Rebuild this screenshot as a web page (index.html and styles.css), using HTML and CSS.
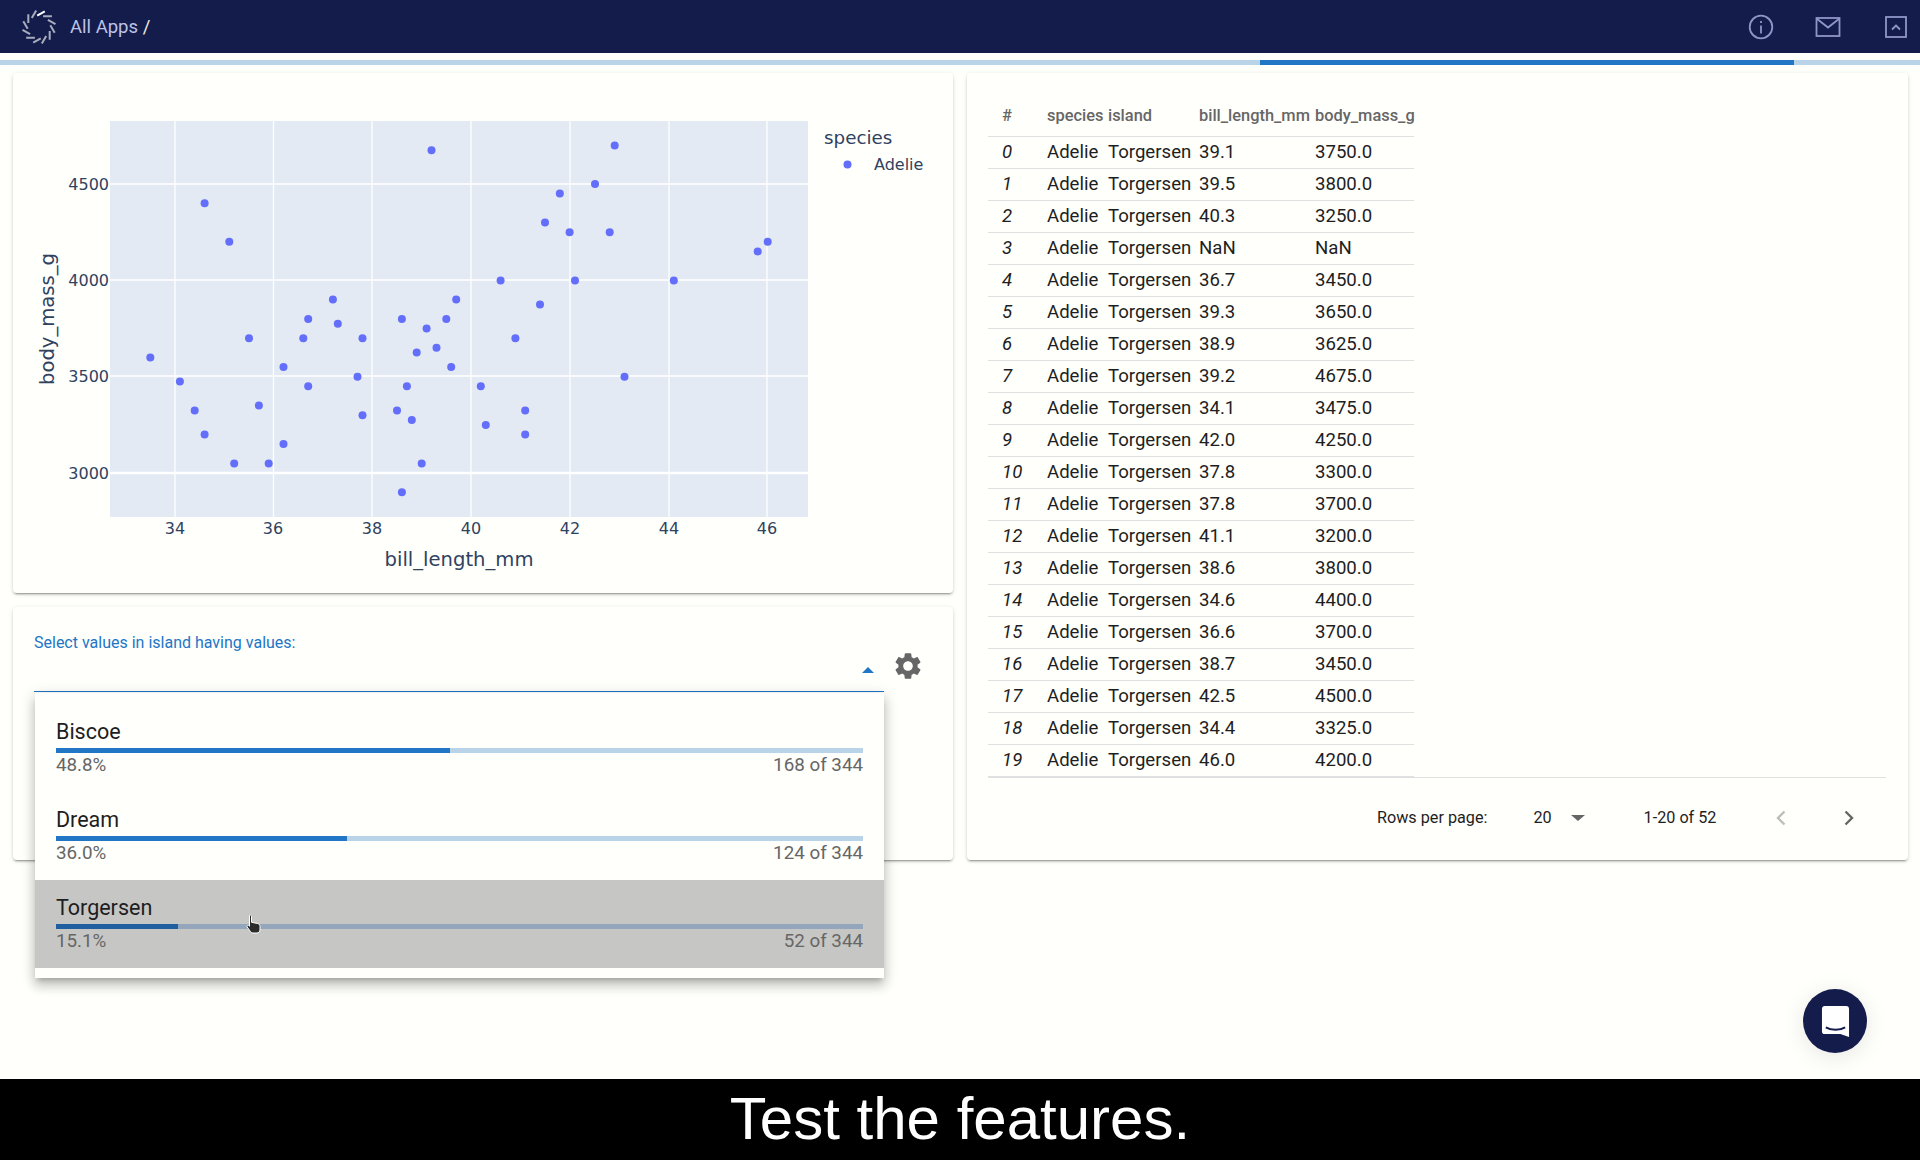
FILE: index.html
```html
<!DOCTYPE html>
<html lang="en">
  <head>
    <meta charset="UTF-8" />
    <title>All Apps</title>
    <link rel="stylesheet" href="styles.css">
  </head>
  <body>
    <header class="topbar">
      <div class="brand">
        <svg class="logo" width="38" height="38" viewBox="-19 -19 38 38">
          <g class="logo-dash">
            <line x1="-1.8" y1="-11.3" x2="5.8" y2="-15.7" class="logo-first" />
            <line x1="-1.8" y1="-11.3" x2="5.8" y2="-15.7" transform="rotate(30)" />
            <line x1="-1.8" y1="-11.3" x2="5.8" y2="-15.7" transform="rotate(60)" />
            <line x1="-1.8" y1="-11.3" x2="5.8" y2="-15.7" transform="rotate(90)" />
            <line x1="-1.8" y1="-11.3" x2="5.8" y2="-15.7" transform="rotate(120)" />
            <line x1="-1.8" y1="-11.3" x2="5.8" y2="-15.7" transform="rotate(150)" />
            <line x1="-1.8" y1="-11.3" x2="5.8" y2="-15.7" transform="rotate(180)" />
            <line x1="-1.8" y1="-11.3" x2="5.8" y2="-15.7" transform="rotate(210)" />
            <line x1="-1.8" y1="-11.3" x2="5.8" y2="-15.7" transform="rotate(240)" />
            <line x1="-1.8" y1="-11.3" x2="5.8" y2="-15.7" transform="rotate(270)" />
            <line x1="-1.8" y1="-11.3" x2="5.8" y2="-15.7" transform="rotate(300)" />
            <line x1="-1.8" y1="-11.3" x2="5.8" y2="-15.7" transform="rotate(330)" />
          </g>
        </svg>
        <span class="crumb">All Apps <span class="crumb-sep">/</span></span>
      </div>
      <div class="top-icons">
        <svg width="26" height="26" viewBox="0 0 26 26" class="top-icon">
          <circle cx="13" cy="13" r="11.3" />
          <line x1="13" y1="11.5" x2="13" y2="19.5" />
          <line x1="13" y1="7" x2="13" y2="9" />
        </svg>
        <svg width="26" height="22" viewBox="0 0 26 22" class="top-icon">
          <rect x="1.5" y="2" width="23" height="18" />
          <polyline points="1.5,2.5 13,11.5 24.5,2.5" />
        </svg>
        <svg width="24" height="24" viewBox="0 0 24 24" class="top-icon top-icon-box">
          <rect x="2" y="2" width="20" height="20" />
          <polyline points="8,14.5 12,10.5 16,14.5" />
        </svg>
      </div>
    </header>

    <div class="progress"><div class="progress-fill"></div></div>

    <main class="content">
      <div class="left-col">
        <section class="card chart-card">
          <svg class="plot" width="940" height="520" viewBox="13 73 940 520">
            <rect x="110" y="121" width="698" height="396" class="plot-bg" />
            <g class="grid">
              <line x1="175" y1="121" x2="175" y2="517" />
              <line x1="273.500" y1="121" x2="273.500" y2="517" />
              <line x1="372" y1="121" x2="372" y2="517" />
              <line x1="471" y1="121" x2="471" y2="517" />
              <line x1="570" y1="121" x2="570" y2="517" />
              <line x1="669" y1="121" x2="669" y2="517" />
              <line x1="767" y1="121" x2="767" y2="517" />
              <line x1="110" y1="184" x2="808" y2="184" />
              <line x1="110" y1="280" x2="808" y2="280" />
              <line x1="110" y1="376" x2="808" y2="376" />
              <line x1="110" y1="473" class="grid-bold" x2="808" y2="473" />
            </g>
            <g class="dots">
              <circle cx="150.3" cy="357.4" r="4" />
              <circle cx="179.9" cy="381.5" r="4" />
              <circle cx="194.7" cy="410.4" r="4" />
              <circle cx="204.6" cy="434.5" r="4" />
              <circle cx="204.6" cy="203.3" r="4" />
              <circle cx="229.3" cy="241.8" r="4" />
              <circle cx="234.2" cy="463.4" r="4" />
              <circle cx="249" cy="338.2" r="4" />
              <circle cx="258.9" cy="405.6" r="4" />
              <circle cx="268.7" cy="463.4" r="4" />
              <circle cx="283.5" cy="367.1" r="4" />
              <circle cx="283.5" cy="444.1" r="4" />
              <circle cx="303.3" cy="338.2" r="4" />
              <circle cx="308.2" cy="318.9" r="4" />
              <circle cx="308.2" cy="386.3" r="4" />
              <circle cx="332.9" cy="299.6" r="4" />
              <circle cx="337.8" cy="323.7" r="4" />
              <circle cx="357.5" cy="376.7" r="4" />
              <circle cx="362.5" cy="338.2" r="4" />
              <circle cx="362.5" cy="415.2" r="4" />
              <circle cx="397" cy="410.4" r="4" />
              <circle cx="401.9" cy="318.9" r="4" />
              <circle cx="401.9" cy="492.3" r="4" />
              <circle cx="406.9" cy="386.3" r="4" />
              <circle cx="411.8" cy="420.1" r="4" />
              <circle cx="416.7" cy="352.6" r="4" />
              <circle cx="421.7" cy="463.4" r="4" />
              <circle cx="426.6" cy="328.5" r="4" />
              <circle cx="431.5" cy="150.3" r="4" />
              <circle cx="436.5" cy="347.8" r="4" />
              <circle cx="446.3" cy="318.9" r="4" />
              <circle cx="451.2" cy="367.1" r="4" />
              <circle cx="456.2" cy="299.6" r="4" />
              <circle cx="480.8" cy="386.3" r="4" />
              <circle cx="485.8" cy="424.9" r="4" />
              <circle cx="500.6" cy="280.4" r="4" />
              <circle cx="515.4" cy="338.2" r="4" />
              <circle cx="525.2" cy="410.4" r="4" />
              <circle cx="525.2" cy="434.5" r="4" />
              <circle cx="540" cy="304.4" r="4" />
              <circle cx="545" cy="222.5" r="4" />
              <circle cx="559.8" cy="193.6" r="4" />
              <circle cx="569.6" cy="232.2" r="4" />
              <circle cx="575" cy="280.4" r="4" />
              <circle cx="595" cy="184" r="4" />
              <circle cx="609.7" cy="232.2" r="4" />
              <circle cx="614.7" cy="145.5" r="4" />
              <circle cx="624.5" cy="376.7" r="4" />
              <circle cx="673.8" cy="280.4" r="4" />
              <circle cx="757.7" cy="251.4" r="4" />
              <circle cx="767.7" cy="241.8" r="4" />
            </g>
            <g class="tick tick-x">
              <text x="175" y="534">34</text>
              <text x="273" y="534">36</text>
              <text x="372" y="534">38</text>
              <text x="471" y="534">40</text>
              <text x="570" y="534">42</text>
              <text x="669" y="534">44</text>
              <text x="767" y="534">46</text>
            </g>
            <g class="tick tick-y">
              <text x="109" y="190">4500</text>
              <text x="109" y="286">4000</text>
              <text x="109" y="382">3500</text>
              <text x="109" y="479">3000</text>
            </g>
            <text class="axis-title" x="459" y="566" text-anchor="middle">bill_length_mm</text>
            <text class="axis-title" transform="translate(54 319) rotate(-90)" text-anchor="middle">body_mass_g</text>
            <text class="legend-title" x="824" y="144">species</text>
            <circle class="legend-dot" cx="847.5" cy="164.5" r="4" />
            <text class="legend-label" x="874" y="170">Adelie</text>
          </svg>
        </section>

        <section class="card select-card">
          <div class="select-row">
            <div class="select-field">
              <div class="select-label">Select values in island having values:</div>
              <div class="select-input"><span class="caret-up"></span></div>
              <div class="dropdown">
                <div class="option">
                  <div class="option-name">Biscoe</div>
                  <div class="bar"><div class="bar-fill" style="width: 48.8%"></div></div>
                  <div class="option-meta"><span>48.8%</span><span>168 of 344</span></div>
                </div>
                <div class="option">
                  <div class="option-name">Dream</div>
                  <div class="bar"><div class="bar-fill" style="width: 36%"></div></div>
                  <div class="option-meta"><span>36.0%</span><span>124 of 344</span></div>
                </div>
                <div class="option option-hover">
                  <div class="option-name">Torgersen</div>
                  <div class="bar"><div class="bar-fill" style="width: 15.1%"></div></div>
                  <div class="option-meta"><span>15.1%</span><span>52 of 344</span></div>
                  <svg class="cursor" width="16" height="20" viewBox="0 0 16 20">
                    <path d="M3.5 1.5c.8-.8 2-.4 2 .8v6l6 1.2c1.500.4 2.500 1.200 2.500 2.800v3.700c0 1.500-1.500 3-3 3H7c-1.500 0-2.300-.8-3-2L1.200 13c-.6-1 .2-2 1.300-1.600l1 .8z" />
                  </svg>
                </div>
              </div>
            </div>
            <svg class="gear" width="32" height="32" viewBox="0 0 24 24">
              <path d="M19.14 12.94c.04-.3.06-.61.06-.94 0-.32-.02-.64-.07-.94l2.03-1.58c.18-.14.23-.41.12-.61l-1.92-3.32c-.12-.22-.37-.29-.59-.22l-2.39.96c-.5-.38-1.03-.7-1.62-.94l-.36-2.54c-.04-.24-.24-.41-.48-.41h-3.84c-.24 0-.43.17-.47.41l-.36 2.54c-.59.24-1.13.57-1.62.94l-2.39-.96c-.22-.08-.47 0-.59.22L2.74 8.87c-.12.21-.08.47.12.61l2.03 1.58c-.05.3-.09.63-.09.94s.02.64.07.94l-2.03 1.58c-.18.14-.23.41-.12.61l1.92 3.32c.12.22.37.29.59.22l2.39-.96c.5.38 1.03.7 1.62.94l.36 2.54c.05.24.24.41.48.41h3.84c.24 0 .44-.17.47-.41l.36-2.54c.59-.24 1.13-.56 1.62-.94l2.39.96c.22.08.47 0 .59-.22l1.92-3.32c.12-.22.07-.47-.12-.61l-2.01-1.58zM12 15.6c-1.98 0-3.6-1.62-3.6-3.6s1.62-3.6 3.6-3.6 3.6 1.62 3.6 3.6-1.62 3.6-3.6 3.6z" />
            </svg>
          </div>
        </section>
      </div>

      <section class="card table-card">
        <table class="data-table">
          <thead>
            <tr><th class="col-idx">#</th><th class="col-species">species</th><th class="col-island">island</th><th class="col-bill">bill_length_mm</th><th class="col-mass">body_mass_g</th></tr>
          </thead>
          <tbody>
            <tr><td class="idx">0</td><td>Adelie</td><td>Torgersen</td><td>39.1</td><td>3750.0</td></tr>
            <tr><td class="idx">1</td><td>Adelie</td><td>Torgersen</td><td>39.5</td><td>3800.0</td></tr>
            <tr><td class="idx">2</td><td>Adelie</td><td>Torgersen</td><td>40.3</td><td>3250.0</td></tr>
            <tr><td class="idx">3</td><td>Adelie</td><td>Torgersen</td><td>NaN</td><td>NaN</td></tr>
            <tr><td class="idx">4</td><td>Adelie</td><td>Torgersen</td><td>36.7</td><td>3450.0</td></tr>
            <tr><td class="idx">5</td><td>Adelie</td><td>Torgersen</td><td>39.3</td><td>3650.0</td></tr>
            <tr><td class="idx">6</td><td>Adelie</td><td>Torgersen</td><td>38.9</td><td>3625.0</td></tr>
            <tr><td class="idx">7</td><td>Adelie</td><td>Torgersen</td><td>39.2</td><td>4675.0</td></tr>
            <tr><td class="idx">8</td><td>Adelie</td><td>Torgersen</td><td>34.1</td><td>3475.0</td></tr>
            <tr><td class="idx">9</td><td>Adelie</td><td>Torgersen</td><td>42.0</td><td>4250.0</td></tr>
            <tr><td class="idx">10</td><td>Adelie</td><td>Torgersen</td><td>37.8</td><td>3300.0</td></tr>
            <tr><td class="idx">11</td><td>Adelie</td><td>Torgersen</td><td>37.8</td><td>3700.0</td></tr>
            <tr><td class="idx">12</td><td>Adelie</td><td>Torgersen</td><td>41.1</td><td>3200.0</td></tr>
            <tr><td class="idx">13</td><td>Adelie</td><td>Torgersen</td><td>38.6</td><td>3800.0</td></tr>
            <tr><td class="idx">14</td><td>Adelie</td><td>Torgersen</td><td>34.6</td><td>4400.0</td></tr>
            <tr><td class="idx">15</td><td>Adelie</td><td>Torgersen</td><td>36.6</td><td>3700.0</td></tr>
            <tr><td class="idx">16</td><td>Adelie</td><td>Torgersen</td><td>38.7</td><td>3450.0</td></tr>
            <tr><td class="idx">17</td><td>Adelie</td><td>Torgersen</td><td>42.5</td><td>4500.0</td></tr>
            <tr><td class="idx">18</td><td>Adelie</td><td>Torgersen</td><td>34.4</td><td>3325.0</td></tr>
            <tr><td class="idx">19</td><td>Adelie</td><td>Torgersen</td><td>46.0</td><td>4200.0</td></tr>
          </tbody>
        </table>
        <div class="pager">
          <span class="pager-label">Rows per page:</span>
          <span class="pager-size">20</span>
          <span class="caret-down"></span>
          <span class="pager-range">1-20 of 52</span>
          <svg class="chevron chevron-off" width="12" height="18" viewBox="0 0 12 18"><polyline points="9.5,2.500 3,9 9.500,15.500" /></svg>
          <svg class="chevron" width="12" height="18" viewBox="0 0 12 18"><polyline points="2.500,2.500 9,9 2.500,15.500" /></svg>
        </div>
      </section>
    </main>

    <button class="chat-btn">
      <svg width="29" height="33" viewBox="0 0 30 34">
        <path class="chat-bubble" d="M4 1h22a3 3 0 0 1 3 3v29l-9-3H4a3 3 0 0 1-3-3V4a3 3 0 0 1 3-3z" />
        <path class="chat-smile" d="M5 23c6 3.500 14 3.500 20 0" />
      </svg>
    </button>

    <footer class="caption">Test the features.</footer>
  </body>
</html>
```

FILE: styles.css
```css
* {
  box-sizing: border-box;
}
html, body {
  height: 100%;
}
body {
  margin: 0;
  display: flex;
  flex-direction: column;
  min-height: 1160px;
  background-color: #fffffc;
  font-family: Roboto, "Liberation Sans", sans-serif;
  color: #1e1e1e;
  overflow: hidden;
}

/* top bar */
.topbar {
  height: 53px;
  flex: none;
  display: flex;
  align-items: center;
  justify-content: space-between;
  background-color: #141c4c;
  padding: 0 12px 0 20px;
}
.brand {
  display: flex;
  align-items: center;
  gap: 12px;
}
.logo-dash line {
  stroke: #a9acbd;
  stroke-width: 2;
}
.logo-dash .logo-first {
  stroke: #fff;
}
.crumb {
  font-size: 18.500px;
  color: #bcc3e6;
}
.crumb-sep {
  color: #f0ecdf;
}
.top-icons {
  display: flex;
  align-items: center;
  gap: 41px;
}
.top-icon {
  fill: none;
  stroke: #8f96c8;
  stroke-width: 1.8;
}
.top-icon-box {
  margin-left: 2px;
}

.progress {
  height: 5px;
  flex: none;
  margin-top: 7px;
  padding-left: 1260px;
  background-color: #b9d4e9;
}
.progress-fill {
  width: 534px;
  height: 100%;
  background-color: #2176c6;
}

/* cards */
.content {
  flex: 1;
  display: grid;
  grid-template-columns: 940px 941px;
  column-gap: 14px;
  align-items: start;
  padding: 8px 0 0 13px;
}
.card {
  background-color: #fffffc;
  border-radius: 4px;
  box-shadow: 0 3px 1px -2px rgba(0, 0, 0, 0.2), 0 2px 2px rgba(0, 0, 0, 0.14), 0 1px 5px rgba(0, 0, 0, 0.12);
}
.left-col {
  display: flex;
  flex-direction: column;
  gap: 14px;
}
.chart-card {
  height: 520px;
}

/* plot */
.plot {
  display: block;
}
.plot-bg {
  fill: #e3eaf4;
}
.grid line {
  stroke: #fff;
  stroke-width: 1.3;
}
.grid .grid-bold {
  stroke-width: 2.4;
}
.dots circle, .legend-dot {
  fill: #636efa;
}
.plot text {
  font-family: "DejaVu Sans", sans-serif;
  fill: #2f4260;
}
.tick {
  font-size: 16px;
}
.tick-x {
  text-anchor: middle;
}
.tick-y {
  text-anchor: end;
}
.axis-title {
  font-size: 19.600px;
}
.legend-title {
  font-size: 18.300px;
}
.legend-label {
  font-size: 16px;
}

/* island select */
.select-card {
  height: 253px;
  padding: 28px 0 0 21px;
}
.select-row {
  display: flex;
  align-items: flex-start;
}
.select-field {
  width: 850px;
  position: relative;
}
.select-label {
  font-size: 16px;
  line-height: 16px;
  color: #2176c6;
}
.select-input {
  height: 41px;
  border-bottom: 1px solid #2176c6;
  display: flex;
  justify-content: flex-end;
  padding: 16px 10px 0 0;
}
.caret-up {
  width: 0;
  height: 0;
  border-left: 6px solid transparent;
  border-right: 6px solid transparent;
  border-bottom: 6px solid #2176c6;
}
.gear {
  fill: #666;
  margin: 15px 0 0 8px;
}
.dropdown {
  position: absolute;
  top: 58px;
  left: 1px;
  right: 0;
  z-index: 5;
  padding: 11px 0 10px;
  background-color: #fffffc;
  box-shadow: 0 5px 5px -3px rgba(0, 0, 0, 0.2), 0 8px 10px 1px rgba(0, 0, 0, 0.14), 0 3px 14px 2px rgba(0, 0, 0, 0.12);
}
.option {
  position: relative;
  height: 88px;
  padding: 15px 21px 0;
}
.option-hover {
  background-color: #c6c6c4;
}
.option-hover .bar {
  background-color: #94a6bb;
}
.option-hover .bar-fill {
  background-color: #1f5f9f;
}
.option-name {
  font-size: 21.500px;
  line-height: 26px;
}
.bar {
  height: 5px;
  margin-top: 3px;
  background-color: #b9d4e9;
}
.bar-fill {
  height: 100%;
  background-color: #2176c6;
}
.option-meta {
  display: flex;
  justify-content: space-between;
  font-size: 18.800px;
  line-height: 24px;
  color: #666;
}
.cursor {
  position: absolute;
  left: 211px;
  top: 34px;
  fill: #2b2b2b;
  stroke: #fff;
  stroke-width: 1;
}

/* data table */
.table-card {
  height: 787px;
  padding-left: 21px;
  padding-right: 22px;
}
.data-table {
  table-layout: fixed;
  width: 426px;
  border-collapse: collapse;
  margin-top: 19px;
}
.data-table th, .data-table td {
  padding: 0;
  text-align: left;
  border-bottom: 1px solid #e0e0e0;
  white-space: nowrap;
}
.data-table th {
  height: 44px;
  padding-top: 3px;
  font-size: 16.400px;
  font-weight: 500;
  color: #666;
}
.data-table td {
  height: 32px;
  font-size: 18.600px;
}
.col-idx {
  width: 59px;
  padding-left: 14px !important;
}
.col-species {
  width: 61px;
}
.col-island {
  width: 91px;
}
.col-bill {
  width: 116px;
}
.data-table .idx {
  padding-left: 14px;
  font-style: italic;
}
.pager {
  display: flex;
  align-items: center;
  height: 81px;
  border-top: 1px solid #e0e0e0;
  padding-left: 389px;
  font-size: 16.200px;
}
.pager-size {
  margin-left: 46px;
}
.caret-down {
  width: 0;
  height: 0;
  margin-left: 19px;
  border-left: 7px solid transparent;
  border-right: 7px solid transparent;
  border-top: 6px solid #666;
}
.pager-range {
  margin-left: 59px;
}
.chevron {
  fill: none;
  stroke: #666;
  stroke-width: 2.400;
  margin-left: 56px;
}
.pager-range + .chevron {
  margin-left: 59px;
}
.chevron-off {
  stroke: #bdbdbd;
}

/* chat and caption */
.chat-btn {
  position: absolute;
  left: 1803px;
  top: 989px;
  width: 64px;
  height: 64px;
  border: none;
  border-radius: 50%;
  padding: 0;
  display: flex;
  align-items: center;
  justify-content: center;
  background-color: #141c4c;
  box-shadow: 0 4px 24px rgba(0, 0, 0, 0.1);
}
.chat-bubble {
  fill: #fff;
}
.chat-smile {
  fill: none;
  stroke: #141c4c;
  stroke-width: 2;
}
.caption {
  height: 81px;
  flex: none;
  display: flex;
  align-items: center;
  justify-content: center;
  padding-bottom: 2px;
  background-color: #000;
  color: #fff;
  font-family: "Liberation Sans", Arial, sans-serif;
  font-size: 60px;
}
```
